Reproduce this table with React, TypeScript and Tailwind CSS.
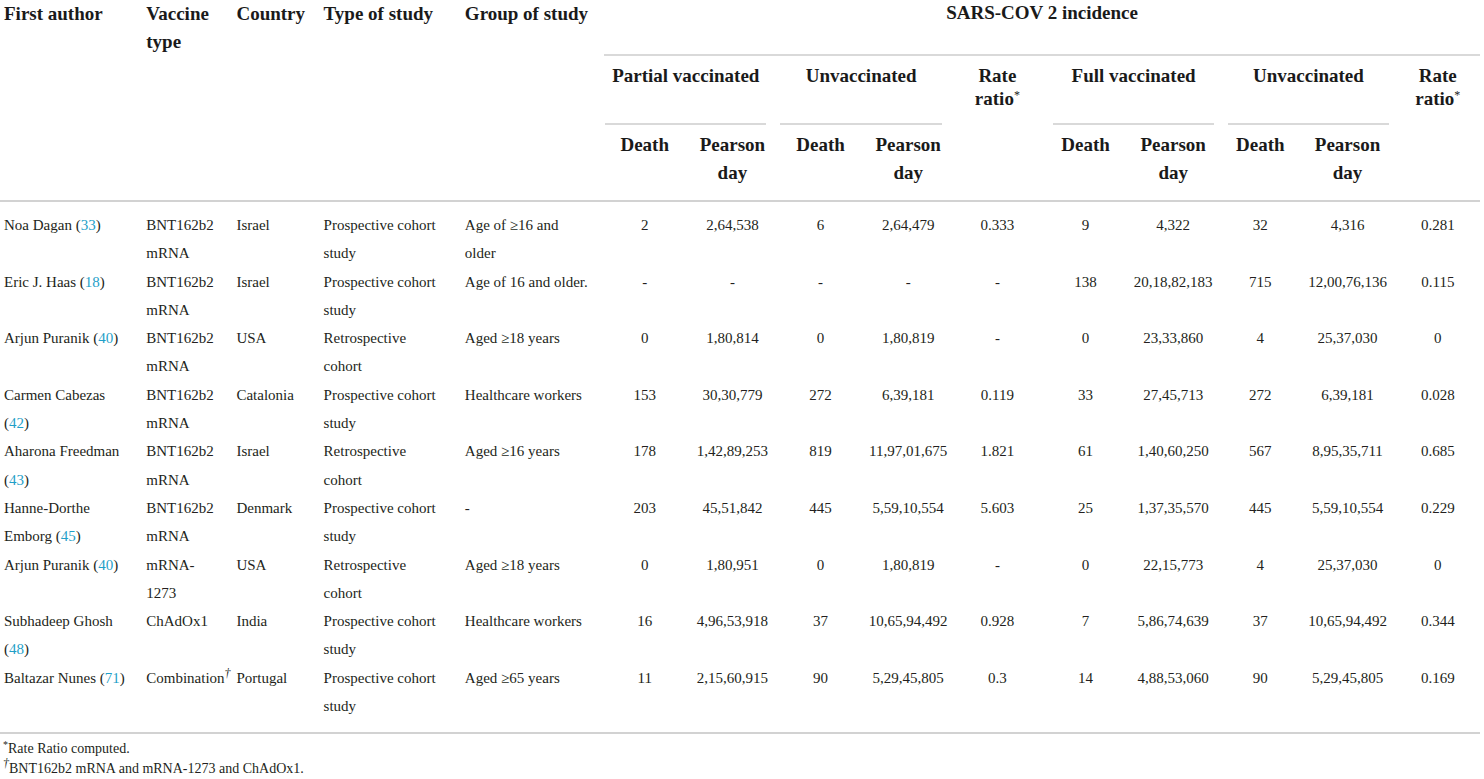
import React from "react";

type Row = {
  name: string[];
  refNo: string;
  vaccine: string[];
  dagger?: boolean;
  country: string;
  type: string[];
  group: string[];
  nums: string[];
};

const prospective = ["Prospective cohort", "study"];
const retrospective = ["Retrospective", "cohort"];
const bnt = ["BNT162b2", "mRNA"];

const rows: Row[] = [
  {
    name: ["Noa Dagan"],
    refNo: "33",
    vaccine: bnt,
    country: "Israel",
    type: prospective,
    group: ["Age of ≥16 and", "older"],
    nums: ["2", "2,64,538", "6", "2,64,479", "0.333", "9", "4,322", "32", "4,316", "0.281"],
  },
  {
    name: ["Eric J. Haas"],
    refNo: "18",
    vaccine: bnt,
    country: "Israel",
    type: prospective,
    group: ["Age of 16 and older."],
    nums: ["-", "-", "-", "-", "-", "138", "20,18,82,183", "715", "12,00,76,136", "0.115"],
  },
  {
    name: ["Arjun Puranik"],
    refNo: "40",
    vaccine: bnt,
    country: "USA",
    type: retrospective,
    group: ["Aged ≥18 years"],
    nums: ["0", "1,80,814", "0", "1,80,819", "-", "0", "23,33,860", "4", "25,37,030", "0"],
  },
  {
    name: ["Carmen Cabezas", ""],
    refNo: "42",
    vaccine: bnt,
    country: "Catalonia",
    type: prospective,
    group: ["Healthcare workers"],
    nums: ["153", "30,30,779", "272", "6,39,181", "0.119", "33", "27,45,713", "272", "6,39,181", "0.028"],
  },
  {
    name: ["Aharona Freedman", ""],
    refNo: "43",
    vaccine: bnt,
    country: "Israel",
    type: retrospective,
    group: ["Aged ≥16 years"],
    nums: ["178", "1,42,89,253", "819", "11,97,01,675", "1.821", "61", "1,40,60,250", "567", "8,95,35,711", "0.685"],
  },
  {
    name: ["Hanne-Dorthe", "Emborg"],
    refNo: "45",
    vaccine: bnt,
    country: "Denmark",
    type: prospective,
    group: ["-"],
    nums: ["203", "45,51,842", "445", "5,59,10,554", "5.603", "25", "1,37,35,570", "445", "5,59,10,554", "0.229"],
  },
  {
    name: ["Arjun Puranik"],
    refNo: "40",
    vaccine: ["mRNA-", "1273"],
    country: "USA",
    type: retrospective,
    group: ["Aged ≥18 years"],
    nums: ["0", "1,80,951", "0", "1,80,819", "-", "0", "22,15,773", "4", "25,37,030", "0"],
  },
  {
    name: ["Subhadeep Ghosh", ""],
    refNo: "48",
    vaccine: ["ChAdOx1"],
    country: "India",
    type: prospective,
    group: ["Healthcare workers"],
    nums: ["16", "4,96,53,918", "37", "10,65,94,492", "0.928", "7", "5,86,74,639", "37", "10,65,94,492", "0.344"],
  },
  {
    name: ["Baltazar Nunes"],
    refNo: "71",
    vaccine: ["Combination"],
    dagger: true,
    country: "Portugal",
    type: prospective,
    group: ["Aged ≥65 years"],
    nums: ["11", "2,15,60,915", "90", "5,29,45,805", "0.3", "14", "4,88,53,060", "90", "5,29,45,805", "0.169"],
  },
];

function Lines({ lines }: { lines: string[] }) {
  return (
    <>
      {lines.map((l, i) => (
        <div key={i}>{l}</div>
      ))}
    </>
  );
}

function Author({ name, refNo }: { name: string[]; refNo: string }) {
  const last = name[name.length - 1];
  return (
    <>
      {name.slice(0, -1).map((l, i) => (
        <div key={i}>{l}</div>
      ))}
      <div>
        {last ? last + " " : ""}(<span className="text-[#1f9fc8]">{refNo}</span>)
      </div>
    </>
  );
}

function GroupHead({ label }: { label: string }) {
  return (
    <th colSpan={2} className="p-0 align-top font-bold">
      <div className="mx-[7px] h-[69px] border-b-2 border-[#d9d9d9] pt-[8px] text-center leading-[23px] whitespace-nowrap">
        {label}
      </div>
    </th>
  );
}

function RateHead() {
  return (
    <th rowSpan={2} className="p-0 align-top font-bold">
      <div className="pt-[8px] text-center leading-[23px]">
        Rate
        <br />
        ratio<sup className="text-[12px] font-normal">*</sup>
      </div>
    </th>
  );
}

function SubHead({ pearson }: { pearson?: boolean }) {
  return (
    <th className="p-0 align-top font-bold">
      <div className="h-[75px] pt-[6px] text-center leading-[28px]">
        {pearson ? (
          <>
            Pearson
            <br />
            day
          </>
        ) : (
          "Death"
        )}
      </div>
    </th>
  );
}

function Rule() {
  return (
    <tr>
      <td colSpan={15} className="p-0">
        <div className="h-[2px] bg-[#d2d2d2]" />
      </td>
    </tr>
  );
}

export default function App() {
  const leftHead = "p-0 align-top text-left font-bold leading-[28px] whitespace-nowrap";

  return (
    <div className="min-h-[779px] w-[1484px] bg-white font-['Liberation_Serif','Times_New_Roman',serif] text-[#231f20]">
      <table className="w-[1480px] table-fixed border-collapse">
        <colgroup>
          <col className="w-[141px]" />
          <col className="w-[90px]" />
          <col className="w-[87px]" />
          <col className="w-[141px]" />
          <col className="w-[138px]" />
          <col className="w-[93px]" />
          <col className="w-[82px]" />
          <col className="w-[94px]" />
          <col className="w-[81px]" />
          <col className="w-[97px]" />
          <col className="w-[79px]" />
          <col className="w-[96px]" />
          <col className="w-[78px]" />
          <col className="w-[96px]" />
          <col className="w-[84px]" />
        </colgroup>
        <thead className="text-[19px] text-[#1a1a1a]">
          <tr>
            <th rowSpan={3} className={leftHead + " pl-[4px]"}>
              First author
            </th>
            <th rowSpan={3} className={leftHead + " pl-[5px]"}>
              Vaccine
              <br />
              type
            </th>
            <th rowSpan={3} className={leftHead + " pl-[5px]"}>
              Country
            </th>
            <th rowSpan={3} className={leftHead + " pl-[5px]"}>
              Type of study
            </th>
            <th rowSpan={3} className={leftHead + " pl-[5px]"}>
              Group of study
            </th>
            <th colSpan={10} className="p-0 align-top font-bold">
              <div className="ml-[6px] h-[56px] border-b-2 border-[#d9d9d9] text-center leading-[26px]">
                SARS-COV 2 incidence
              </div>
            </th>
          </tr>
          <tr>
            <GroupHead label="Partial vaccinated" />
            <GroupHead label="Unvaccinated" />
            <RateHead />
            <GroupHead label="Full vaccinated" />
            <GroupHead label="Unvaccinated" />
            <RateHead />
          </tr>
          <tr>
            <SubHead />
            <SubHead pearson />
            <SubHead />
            <SubHead pearson />
            <SubHead />
            <SubHead pearson />
            <SubHead />
            <SubHead pearson />
          </tr>
        </thead>
        <tbody className="text-[15px] leading-[28.3px]">
          <Rule />
          <tr>
            <td colSpan={15} className="h-[9px] p-0" />
          </tr>
          {rows.map((r, i) => (
            <tr key={i} className="h-[56.6px] align-top">
              <td className="pl-[4px] whitespace-nowrap">
                <Author name={r.name} refNo={r.refNo} />
              </td>
              <td className="pl-[5px] whitespace-nowrap">
                {r.dagger ? (
                  <div>
                    {r.vaccine[0]}
                    <sup className="text-[12px] italic">†</sup>
                  </div>
                ) : (
                  <Lines lines={r.vaccine} />
                )}
              </td>
              <td className="pl-[5px] whitespace-nowrap">{r.country}</td>
              <td className="pl-[5px] whitespace-nowrap">
                <Lines lines={r.type} />
              </td>
              <td className="pl-[5px] whitespace-nowrap">
                <Lines lines={r.group} />
              </td>
              {r.nums.map((n, j) => (
                <td key={j} className="text-center whitespace-nowrap">
                  {n}
                </td>
              ))}
            </tr>
          ))}
          <tr>
            <td colSpan={15} className="h-[12px] p-0" />
          </tr>
          <Rule />
        </tbody>
      </table>
      <div className="mt-[5px] pl-[3px] text-[14px] leading-[20px]">
        <div>
          <sup className="text-[10px]">*</sup>Rate Ratio computed.
        </div>
        <div>
          <sup className="text-[12px] italic">†</sup>BNT162b2 mRNA and mRNA-1273 and ChAdOx1.
        </div>
      </div>
    </div>
  );
}
